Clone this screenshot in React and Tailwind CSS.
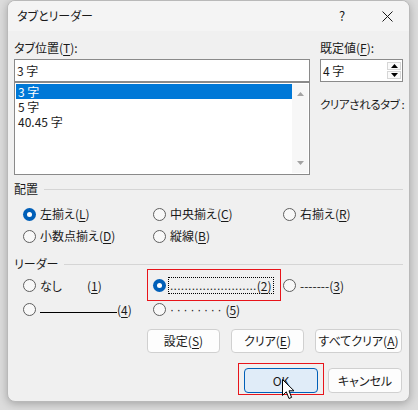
import React from 'react';

const FONT = "font-['Noto_Sans_CJK_JP','Noto_Sans',sans-serif] [font-feature-settings:'palt']";

// 配置 / リーダー options
const ALIGNS = [
    [{ label: '左揃え', key: 'L', checked: true }, { label: '中央揃え', key: 'C' }, { label: '右揃え', key: 'R' }],
    [{ label: '小数点揃え', key: 'D' }, { label: '縦線', key: 'B' }],
];

function Radio({ checked }) {
    if (checked) {
        return (
            <span className="flex h-[13px] w-[13px] shrink-0 items-center justify-center rounded-full bg-[#005fb8]">
                <span className="h-[5px] w-[5px] rounded-full bg-white" />
            </span>
        );
    }
    return <span className="h-[13px] w-[13px] shrink-0 rounded-full border border-[#5f5f5f] bg-[#f8f8f8]" />;
}

function Key({ k }) {
    return (
        <>
            (<u className="underline-offset-2">{k}</u>)
        </>
    );
}

function GroupLabel({ children }) {
    return (
        <div className="flex items-center gap-[6px]">
            <span className="leading-[14px]">{children}</span>
            <span className="h-px flex-1 bg-[#d5d5d5]" />
        </div>
    );
}

function Button({ children, className = '' }) {
    return (
        <button className={`flex h-[24px] items-center justify-center rounded-[4px] border border-[#d0d0d0] bg-[#fdfdfd] text-[12px] text-[#1a1a1a] ${className}`}>
            {children}
        </button>
    );
}

function Triangle({ up, color = '#000' }) {
    return (
        <svg width="7" height="4" viewBox="0 0 7 4">
            <path d={up ? 'M0 4 L3.5 0 L7 4 Z' : 'M0 0 L3.5 4 L7 0 Z'} fill={color} />
        </svg>
    );
}

export default function App() {
    return (
        <div className={`h-[410px] w-[418px] overflow-hidden bg-[#dcdcdc] pl-[7px] text-[12px] text-[#1a1a1a] ${FONT}`}>
            <div className="flex h-[402px] w-[403px] flex-col overflow-hidden rounded-[8px] border border-[#b9b9b9] bg-[#f0f0f0] shadow-[0_2px_8px_rgba(0,0,0,0.25)]">
                {/* title bar */}
                <div className="flex h-[30px] shrink-0 items-center bg-[#f4f4f4] pl-[9px]">
                    <span>タブとリーダー</span>
                    <span className="ml-auto flex w-[46px] justify-center text-[13px]">?</span>
                    <span className="flex w-[44px] justify-center">
                        <svg width="11" height="11" viewBox="0 0 11 11">
                            <path d="M0.5 0.5 L10.5 10.5 M10.5 0.5 L0.5 10.5" stroke="#1a1a1a" strokeWidth="1" />
                        </svg>
                    </span>
                </div>

                <div className="flex flex-1 flex-col px-[6px]">
                    {/* tab stops */}
                    <div className="mt-[10px] flex gap-[10px]">
                        <div className="w-[297px]">
                            <div className="leading-[14px]">タブ位置<Key k="T" />:</div>
                            <div className="mt-[4px] flex h-[23px] items-center border border-[#8a8a8a] bg-white pl-[2px]">3 字</div>
                            <div className="flex h-[93px] border border-[#8a8a8a] bg-white p-px">
                                <div className="flex-1 leading-[15px]">
                                    <div className="bg-[#0078d7] pl-[2px] text-white">3 字</div>
                                    <div className="pl-[2px]">5 字</div>
                                    <div className="pl-[2px]">40.45 字</div>
                                </div>
                                <div className="flex w-[16px] flex-col items-center justify-between bg-[#f7f7f7] py-[8px]">
                                    <Triangle up color="#a3a3a3" />
                                    <Triangle color="#a3a3a3" />
                                </div>
                            </div>
                        </div>
                        <div className="w-[83px]">
                            <div className="leading-[14px]">既定値<Key k="F" />:</div>
                            <div className="mt-[4px] flex h-[23px] items-center border border-[#8a8a8a] bg-white pl-[2px] pr-px">
                                <span>4 字</span>
                                <div className="ml-auto flex flex-col gap-px">
                                    <span className="flex h-[8px] w-[14px] items-center justify-center border border-[#d6d6d6] bg-[#fafafa]">
                                        <Triangle up />
                                    </span>
                                    <span className="flex h-[8px] w-[14px] items-center justify-center border border-[#d6d6d6] bg-[#fafafa]">
                                        <Triangle />
                                    </span>
                                </div>
                            </div>
                            <div className="mt-[15px] whitespace-nowrap text-[11.5px] leading-[14px] tracking-[-0.4px]">クリアされるタブ :</div>
                        </div>
                    </div>

                    {/* alignment */}
                    <div className="mt-[7px]">
                        <GroupLabel>配置</GroupLabel>
                    </div>
                    <div className="mt-[9px] flex flex-col gap-[4px] pl-[9px]">
                        {ALIGNS.map((row, i) => (
                            <div key={i} className="grid h-[18px] grid-cols-[130px_130px_130px]">
                                {row.map(opt => (
                                    <label key={opt.key} className="flex items-center gap-[4px]">
                                        <Radio checked={opt.checked} />
                                        <span>{opt.label}<Key k={opt.key} /></span>
                                    </label>
                                ))}
                            </div>
                        ))}
                    </div>

                    {/* leader */}
                    <div className="mt-[12px]">
                        <GroupLabel>リーダー</GroupLabel>
                    </div>
                    <div className="mt-[5px] flex flex-col gap-[5px] pl-[9px]">
                        <div className="grid h-[19px] grid-cols-[130px_130px_130px]">
                            <label className="flex items-center gap-[4px]">
                                <Radio />
                                <span className="w-[43px]">なし</span>
                                <span><Key k="1" /></span>
                            </label>
                            <label className="relative flex items-center gap-[2px]">
                                <Radio checked />
                                <span className="flex h-[17px] w-[106px] shrink-0 items-center border border-dotted border-black pl-px">
                                    <span className="whitespace-nowrap font-['Liberation_Sans',sans-serif] tracking-[0.28px]">........................</span>
                                    <span className="shrink-0"><Key k="2" /></span>
                                </span>
                                <span className="absolute left-[-6px] top-[-7px] h-[32px] w-[134px] border border-[#e8141a]" />
                            </label>
                            <label className="flex items-center gap-[4px]">
                                <Radio />
                                <span>-------<Key k="3" /></span>
                            </label>
                        </div>
                        <div className="grid h-[19px] grid-cols-[130px_130px_130px]">
                            <label className="flex items-center gap-[4px]">
                                <Radio />
                                <span className="flex items-center">
                                    <span className="mt-[6px] h-px w-[77px] bg-black" />
                                    <Key k="4" />
                                </span>
                            </label>
                            <label className="flex items-center gap-[4px]">
                                <Radio />
                                <span className="whitespace-nowrap font-['Liberation_Sans',sans-serif] tracking-[2.8px]">········</span>
                                <span className="-ml-[3px]"><Key k="5" /></span>
                            </label>
                        </div>
                    </div>

                    {/* action buttons */}
                    <div className="mt-[10px] flex justify-end gap-[11px] pr-px">
                        <Button className="w-[73px]">設定<Key k="S" /></Button>
                        <Button className="w-[73px]">クリア<Key k="E" /></Button>
                        <Button className="w-[87px]">すべてクリア<Key k="A" /></Button>
                    </div>
                    <div className="mt-[15px] flex justify-end gap-[10px] pr-px">
                        <div className="relative">
                            <button className="flex h-[25px] w-[74px] items-center justify-center rounded-[4px] border border-[#005fb8] bg-[#e0ecf8] text-[12px]">OK</button>
                            <span className="absolute left-[-6px] top-[-5px] h-[32px] w-[86px] border border-[#e8141a]" />
                            <svg className="absolute left-[38px] top-[11px]" width="13" height="21" viewBox="0 0 13 21">
                                <path d="M0.5 0.5 L0.5 16.5 L4.3 12.8 L7 19.5 L9.6 18.4 L7 11.8 L12 11.8 Z" fill="#fff" stroke="#000" strokeWidth="1" strokeLinejoin="round" />
                            </svg>
                        </div>
                        <Button className="h-[25px] w-[74px]">キャンセル</Button>
                    </div>
                </div>
            </div>
        </div>
    );
}
